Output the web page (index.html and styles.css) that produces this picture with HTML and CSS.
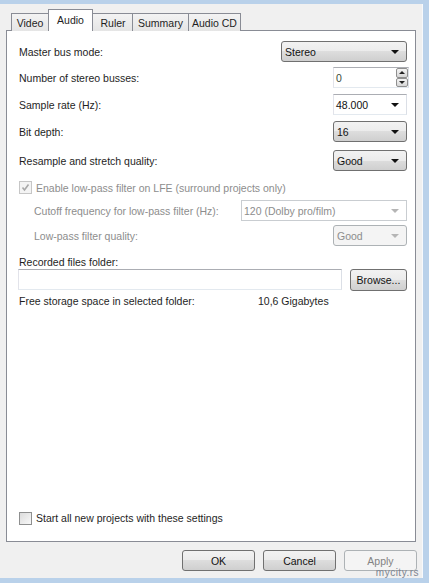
FILE: index.html
```html
<!DOCTYPE html>
<html>
<head>
<meta charset="utf-8">
<link rel="stylesheet" href="styles.css">
</head>
<body>
<div class="window">
  <div class="dialog">
    <div class="tabs">
      <div class="tab t-video">Video</div>
      <div class="tab sel t-audio">Audio</div>
      <div class="tab t-ruler">Ruler</div>
      <div class="tab t-summary">Summary</div>
      <div class="tab t-cd">Audio CD</div>
    </div>
    <div class="panel">
      <div class="row r1">
        <span class="lbl">Master bus mode:</span>
        <div class="combo w126"><span>Stereo</span><i class="arr"></i></div>
      </div>
      <div class="row r2">
        <span class="lbl">Number of stereo busses:</span>
        <div class="spin"><span class="val">0</span>
          <div class="spinbtns"><div class="sb up"><i></i></div><div class="sb dn"><i></i></div></div>
        </div>
      </div>
      <div class="row r3">
        <span class="lbl">Sample rate (Hz):</span>
        <div class="combo edit w74"><span>48.000</span><i class="arr"></i></div>
      </div>
      <div class="row r4">
        <span class="lbl">Bit depth:</span>
        <div class="combo w74"><span>16</span><i class="arr"></i></div>
      </div>
      <div class="row r5">
        <span class="lbl">Resample and stretch quality:</span>
        <div class="combo w74"><span>Good</span><i class="arr"></i></div>
      </div>
      <div class="row r6">
        <label class="chk dis"><span class="box checked"><svg viewBox="0 0 11 11" width="11" height="11"><path d="M2.5 5.5 L4.5 8 L8.5 2.5" fill="none" stroke="#a8a8a8" stroke-width="1.6"/></svg></span>Enable low-pass filter on LFE (surround projects only)</label>
      </div>
      <div class="row r7 sub">
        <span class="lbl dis">Cutoff frequency for low-pass filter (Hz):</span>
        <div class="combo edit disabled w166"><span>120 (Dolby pro/film)</span><i class="arr"></i></div>
      </div>
      <div class="row r8 sub">
        <span class="lbl dis">Low-pass filter quality:</span>
        <div class="combo disabled flat w74"><span>Good</span><i class="arr"></i></div>
      </div>
      <div class="row text r9">
        <span class="lbl">Recorded files folder:</span>
      </div>
      <div class="row r10">
        <div class="input"></div>
        <div class="btn browse">Browse...</div>
      </div>
      <div class="row text r11">
        <span class="lbl free">Free storage space in selected folder:</span>
        <span class="lbl">10,6 Gigabytes</span>
      </div>
      <div class="spacer"></div>
      <div class="row text r12">
        <label class="chk"><span class="box"></span>Start all new projects with these settings</label>
      </div>
    </div>
    <div class="buttons">
      <div class="btn">OK</div>
      <div class="btn">Cancel</div>
      <div class="btn disabled">Apply</div>
    </div>
  </div>
  <div class="wm">mycity.rs</div>
</div>
</body>
</html>
```
FILE: styles.css
```css
html, body { margin: 0; padding: 0; }
body {
  width: 429px; height: 583px; overflow: hidden;
  font-family: "Liberation Sans", Arial, sans-serif;
  font-size: 10.5px; color: #1e1e1e;
  background: #b9d1ea;
}
.window {
  position: relative;
  width: 429px; height: 583px; box-sizing: border-box;
  padding: 4px 6px 5px 0;
}
.dialog {
  background: #f0f0f0;
  height: 100%;
  box-sizing: border-box;
  border-right: 1px solid #f7f9fc;
  display: flex; flex-direction: column;
}
.tabs {
  display: flex; align-items: flex-end;
  height: 23px; margin: 4px 0 -1px 11px;
  position: relative; z-index: 2;
}
.tab {
  box-sizing: border-box;
  height: 18px; padding-top: 3px;
  border: 1px solid #898c95; border-bottom: none;
  border-right: none;
  background: linear-gradient(#f3f3f3, #e5e5e5);
  text-align: center;
}
.tab.t-video { width: 37px; }
.tab.t-audio { width: 45px; }
.tab.t-ruler { width: 40px; }
.tab.t-summary { width: 56px; }
.tab.t-cd { width: 53px; border-right: 1px solid #898c95; }
.tab.sel {
  height: 22px; padding-top: 4px;
  background: #fff; border-right: 1px solid #898c95;
  margin-right: -1px; position: relative; z-index: 2;
}
.tab.t-ruler { padding-left: 1px; }
.panel {
  margin-left: 6px; width: 410px; height: 512px;
  box-sizing: border-box;
  border: 1px solid #898c95; background: #fff;
  padding: 10px 8px 16px 12px;
  display: flex; flex-direction: column;
}
.row {
  display: flex; align-items: center; justify-content: space-between;
  height: 21px; flex: none;
}
.row.text { height: 14px; justify-content: flex-start; }
.r2 { margin-top: 5px; }
.r3 { margin-top: 6px; }
.r4 { margin-top: 6px; }
.r5 { margin-top: 8px; }
.r6 { margin-top: 6px; }
.r7 { margin-top: 2px; }
.r8 { margin-top: 4px; }
.r9 { margin-top: 9px; }
.r10 { margin-top: 0; }
.r11 { margin-top: 4px; }
.sub .lbl { padding-left: 15px; }
.lbl.dis, .chk.dis { color: #8d8d8d; }
.free { width: 239px; }
.spacer { flex: 1; }

.combo {
  box-sizing: border-box; height: 21px;
  border: 1px solid #707070; border-radius: 3px;
  background: linear-gradient(#f2f2f2 0%, #ebebeb 50%, #dddddd 50%, #cfcfcf 100%);
  display: flex; align-items: center; justify-content: space-between;
  padding: 0 7px 0 3px; color: #111;
}
.combo.edit {
  border-radius: 0; background: #fff;
  border-color: #abadb3 #dbdfe6 #e3e9ef #e2e3ea;
  padding-left: 2px;
}
.combo.disabled { color: #8d8d8d; border-color: #c9cdd1; }
.combo.flat { background: #f4f4f4; border-radius: 3px; border-color: #adb2b5; }
.w126 { width: 126px; }
.w74 { width: 74px; }
.w166 { width: 166px; }
.arr {
  width: 0; height: 0;
  border-left: 4px solid transparent; border-right: 4px solid transparent;
  border-top: 4px solid #111;
}
.disabled .arr { border-top-color: #b5b5b5; }

.spin {
  box-sizing: border-box; width: 76px; height: 21px;
  border: 1px solid; border-color: #abadb3 #dbdfe6 #e3e9ef #e2e3ea;
  display: flex; align-items: center; justify-content: space-between;
  padding-left: 2px; margin-right: -2px; color: #3a4a3a;
}
.spinbtns { display: flex; flex-direction: column; height: 19px; width: 12px; }
.sb {
  flex: 1; box-sizing: border-box;
  border: 1px solid #8f8f8f; border-radius: 2px;
  background: linear-gradient(#f4f4f4, #d6d6d6);
  display: flex; align-items: center; justify-content: center;
}
.sb i { width: 0; height: 0; border-left: 3px solid transparent; border-right: 3px solid transparent; }
.sb.up i { border-bottom: 3px solid #222; }
.sb.dn i { border-top: 3px solid #222; }

.chk { display: flex; align-items: center; gap: 4px; margin-left: 0; }
.box {
  box-sizing: border-box; width: 13px; height: 13px;
  border: 1px solid #8e8f8f;
  background: linear-gradient(135deg, #dcdcdc, #f8f8f8);
  display: flex; align-items: center; justify-content: center;
}
.chk.dis .box { border-color: #c6c6c6; background: #f4f4f4; }

.input {
  box-sizing: border-box; width: 324px; height: 21px; margin-left: -1px;
  border: 1px solid; border-color: #abadb3 #dbdfe6 #e3e9ef #e2e3ea;
  background: #fff;
}
.btn {
  box-sizing: border-box; width: 73px; height: 21px;
  border: 1px solid #707070; border-radius: 3px;
  background: linear-gradient(#f2f2f2 0%, #ebebeb 50%, #dddddd 50%, #cfcfcf 100%);
  display: flex; align-items: center; justify-content: center;
  color: #111;
}
.btn.browse { width: 57px; height: 22px; }
.btn.disabled { background: #f4f4f4; border-color: #adb2b5; color: #838383; }
.buttons {
  display: flex; gap: 8px; justify-content: flex-end;
  margin-top: 8px; padding-right: 5px;
}
.wm {
  position: absolute; right: 10px; bottom: 5px;
  font-size: 10px; color: #7d8590; letter-spacing: 0.5px;
}
```
